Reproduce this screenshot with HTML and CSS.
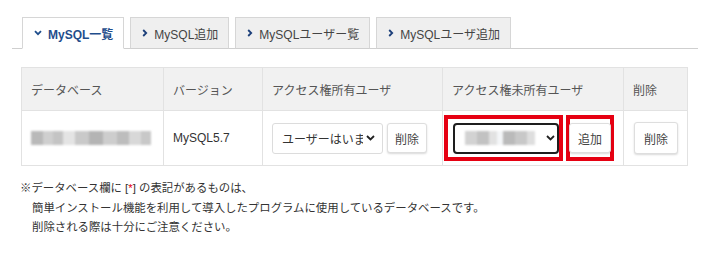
FILE: index.html
```html
<!DOCTYPE html>
<html lang="ja">
<head>
    <meta charset="UTF-8">
    <title>MySQL一覧</title>
    <link rel="stylesheet" href="styles.css">
</head>
<body>
    <ul class="tabs">
        <li class="tab active">
            <svg class="chev" width="8" height="6" viewBox="0 0 8 6"><path d="M1 1.2 L4 4.2 L7 1.2" fill="none" stroke="currentColor" stroke-width="1.8"/></svg>
            MySQL一覧
        </li>
        <li class="tab">
            <svg class="chev" width="6" height="8" viewBox="0 0 6 8"><path d="M1.2 1 L4.2 4 L1.2 7" fill="none" stroke="currentColor" stroke-width="1.8"/></svg>
            MySQL追加
        </li>
        <li class="tab">
            <svg class="chev" width="6" height="8" viewBox="0 0 6 8"><path d="M1.2 1 L4.2 4 L1.2 7" fill="none" stroke="currentColor" stroke-width="1.8"/></svg>
            MySQLユーザー覧
        </li>
        <li class="tab">
            <svg class="chev" width="6" height="8" viewBox="0 0 6 8"><path d="M1.2 1 L4.2 4 L1.2 7" fill="none" stroke="currentColor" stroke-width="1.8"/></svg>
            MySQLユーザ追加
        </li>
    </ul>

    <table class="db-table">
        <colgroup>
            <col style="width: 142px">
            <col style="width: 99px">
            <col style="width: 180px">
            <col style="width: 181px">
            <col style="width: 64px">
        </colgroup>
        <tr>
            <th>データベース</th>
            <th>バージョン</th>
            <th>アクセス権所有ユーザ</th>
            <th>アクセス権未所有ユーザ</th>
            <th>削除</th>
        </tr>
        <tr>
            <td><span class="masked masked-name"></span></td>
            <td>MySQL5.7</td>
            <td>
                <div class="cell-row">
                    <div class="select-box">
                        <span class="select-text">ユーザーはいま</span>
                        <svg class="select-arrow" width="9" height="6" viewBox="0 0 9 6"><path d="M1 1 L4.5 4.5 L8 1" fill="none" stroke="#222" stroke-width="1.8"/></svg>
                    </div>
                    <button class="btn">削除</button>
                </div>
            </td>
            <td class="cell-marked">
                <div class="cell-row">
                    <div class="mark mark-select">
                        <div class="select-box focused">
                            <span class="masked masked-user"></span>
                            <svg class="select-arrow" width="9" height="6" viewBox="0 0 9 6"><path d="M1 1 L4.5 4.5 L8 1" fill="none" stroke="#222" stroke-width="1.8"/></svg>
                        </div>
                    </div>
                    <div class="mark mark-btn">
                        <button class="btn">追加</button>
                    </div>
                </div>
            </td>
            <td><button class="btn btn-wide">削除</button></td>
        </tr>
    </table>

    <div class="note">
        <p>※データベース欄に [<span class="star">*</span>] の表記があるものは、</p>
        <p class="indent">簡単インストール機能を利用して導入したプログラムに使用しているデータベースです。</p>
        <p class="indent">削除される際は十分にご注意ください。</p>
    </div>
</body>
</html>
```

FILE: styles.css
```css
body {
    margin: 0;
    background: #fff;
    font-family: "Liberation Sans", "Noto Sans CJK JP", sans-serif;
    color: #333;
}
.tabs {
    list-style: none;
    display: flex;
    gap: 6px;
    margin: 17px 12px 0 12px;
    padding: 0 0 0 10px;
    width: 676px;
    border-bottom: 1px solid #cfcfcf;
}
.tab {
    display: flex;
    align-items: center;
    gap: 6px;
    height: 30px;
    padding: 0 10px 0 11px;
    margin-bottom: -1px;
    background: #efefef;
    border: 1px solid #d6d6d6;
    border-bottom: 1px solid #cfcfcf;
    font-size: 12px;
    color: #444;
}
.tab .chev {
    color: #1c3f7a;
}
.tab.active {
    background: #fff;
    color: #1f4e8c;
    font-weight: bold;
    border-bottom: 1px solid #fff;
}
.tab.active .chev {
    color: #1f4e8c;
}
.db-table {
    margin: 18px 0 0 21px;
    border-collapse: collapse;
    table-layout: fixed;
    width: 666px;
    font-size: 12px;
}
.db-table th,
.db-table td {
    border: 1px solid #e2e2e2;
    padding: 0 9px;
    text-align: left;
    vertical-align: middle;
}
.db-table th {
    height: 42px;
    background: #f1f1f1;
    font-weight: normal;
    color: #555;
}
.db-table td {
    height: 54px;
    color: #333;
}
.db-table td.cell-marked {
    padding: 0 0 0 1px;
}
.cell-row {
    display: flex;
    align-items: center;
    gap: 4px;
}
.cell-marked .cell-row {
    gap: 3px;
}
.select-box {
    display: flex;
    align-items: center;
    box-sizing: border-box;
    width: 111px;
    height: 31px;
    padding: 0 7px 0 9px;
    border: 1px solid #dcdcdc;
    border-radius: 3px;
    background: #fff;
    overflow: hidden;
}
.select-text {
    flex: 1;
    overflow: hidden;
    white-space: nowrap;
    font-size: 12px;
    color: #333;
}
.select-arrow {
    flex: none;
    margin-left: 3px;
}
.select-box.focused {
    width: 108px;
    border: 2px solid #1e1e1e;
    border-radius: 4px;
    padding: 0 2px 0 8px;
}
.btn {
    box-sizing: border-box;
    width: 40px;
    height: 30px;
    padding: 0;
    background: #fff;
    border: 1px solid #dedede;
    border-radius: 3px;
    box-shadow: 0 1px 2px rgba(0, 0, 0, 0.15);
    font-family: inherit;
    font-size: 12px;
    color: #444;
}
.btn-wide {
    width: 44px;
    height: 32px;
    margin-left: 1px;
}
.mark {
    box-sizing: border-box;
    height: 46px;
    border: 4px solid #e60012;
    display: flex;
    align-items: center;
}
.mark-select {
    width: 119px;
    padding-left: 5px;
    overflow: hidden;
}
.mark-btn {
    width: 48px;
    justify-content: center;
}
.mark-btn .btn {
    width: 42px;
    flex: none;
}
.masked {
    display: block;
    height: 14px;
    filter: blur(0.8px);
}
.masked-name {
    width: 120px;
    background: linear-gradient(90deg,
        #b9b9b9 0 12px, #cfcfcf 12px 22px, #c4c4c4 22px 32px, #e4e4e4 32px 44px,
        #c9c9c9 44px 58px, #b4b4b4 58px 72px, #cdcdcd 72px 86px, #bdbdbd 86px 98px,
        #d8d8d8 98px 110px, #c8c8c8 110px 120px);
}
.masked-user {
    flex: 1;
    height: 14px;
    background: linear-gradient(90deg,
        #fff 0 2px, #d2d2d2 2px 14px, #c2c2c2 14px 26px, #e2e2e2 26px 34px,
        #f4f6f8 34px 40px, #bababa 40px 52px, #c8c8c8 52px 64px, #dedede 64px 72px, #fff 72px);
}
.note {
    margin: 13px 0 0 20px;
    font-size: 11.4px;
    color: #333;
}
.note p {
    margin: 0;
    line-height: 19.5px;
}
.note .indent {
    padding-left: 12px;
}
.star {
    color: #e60012;
}
```
